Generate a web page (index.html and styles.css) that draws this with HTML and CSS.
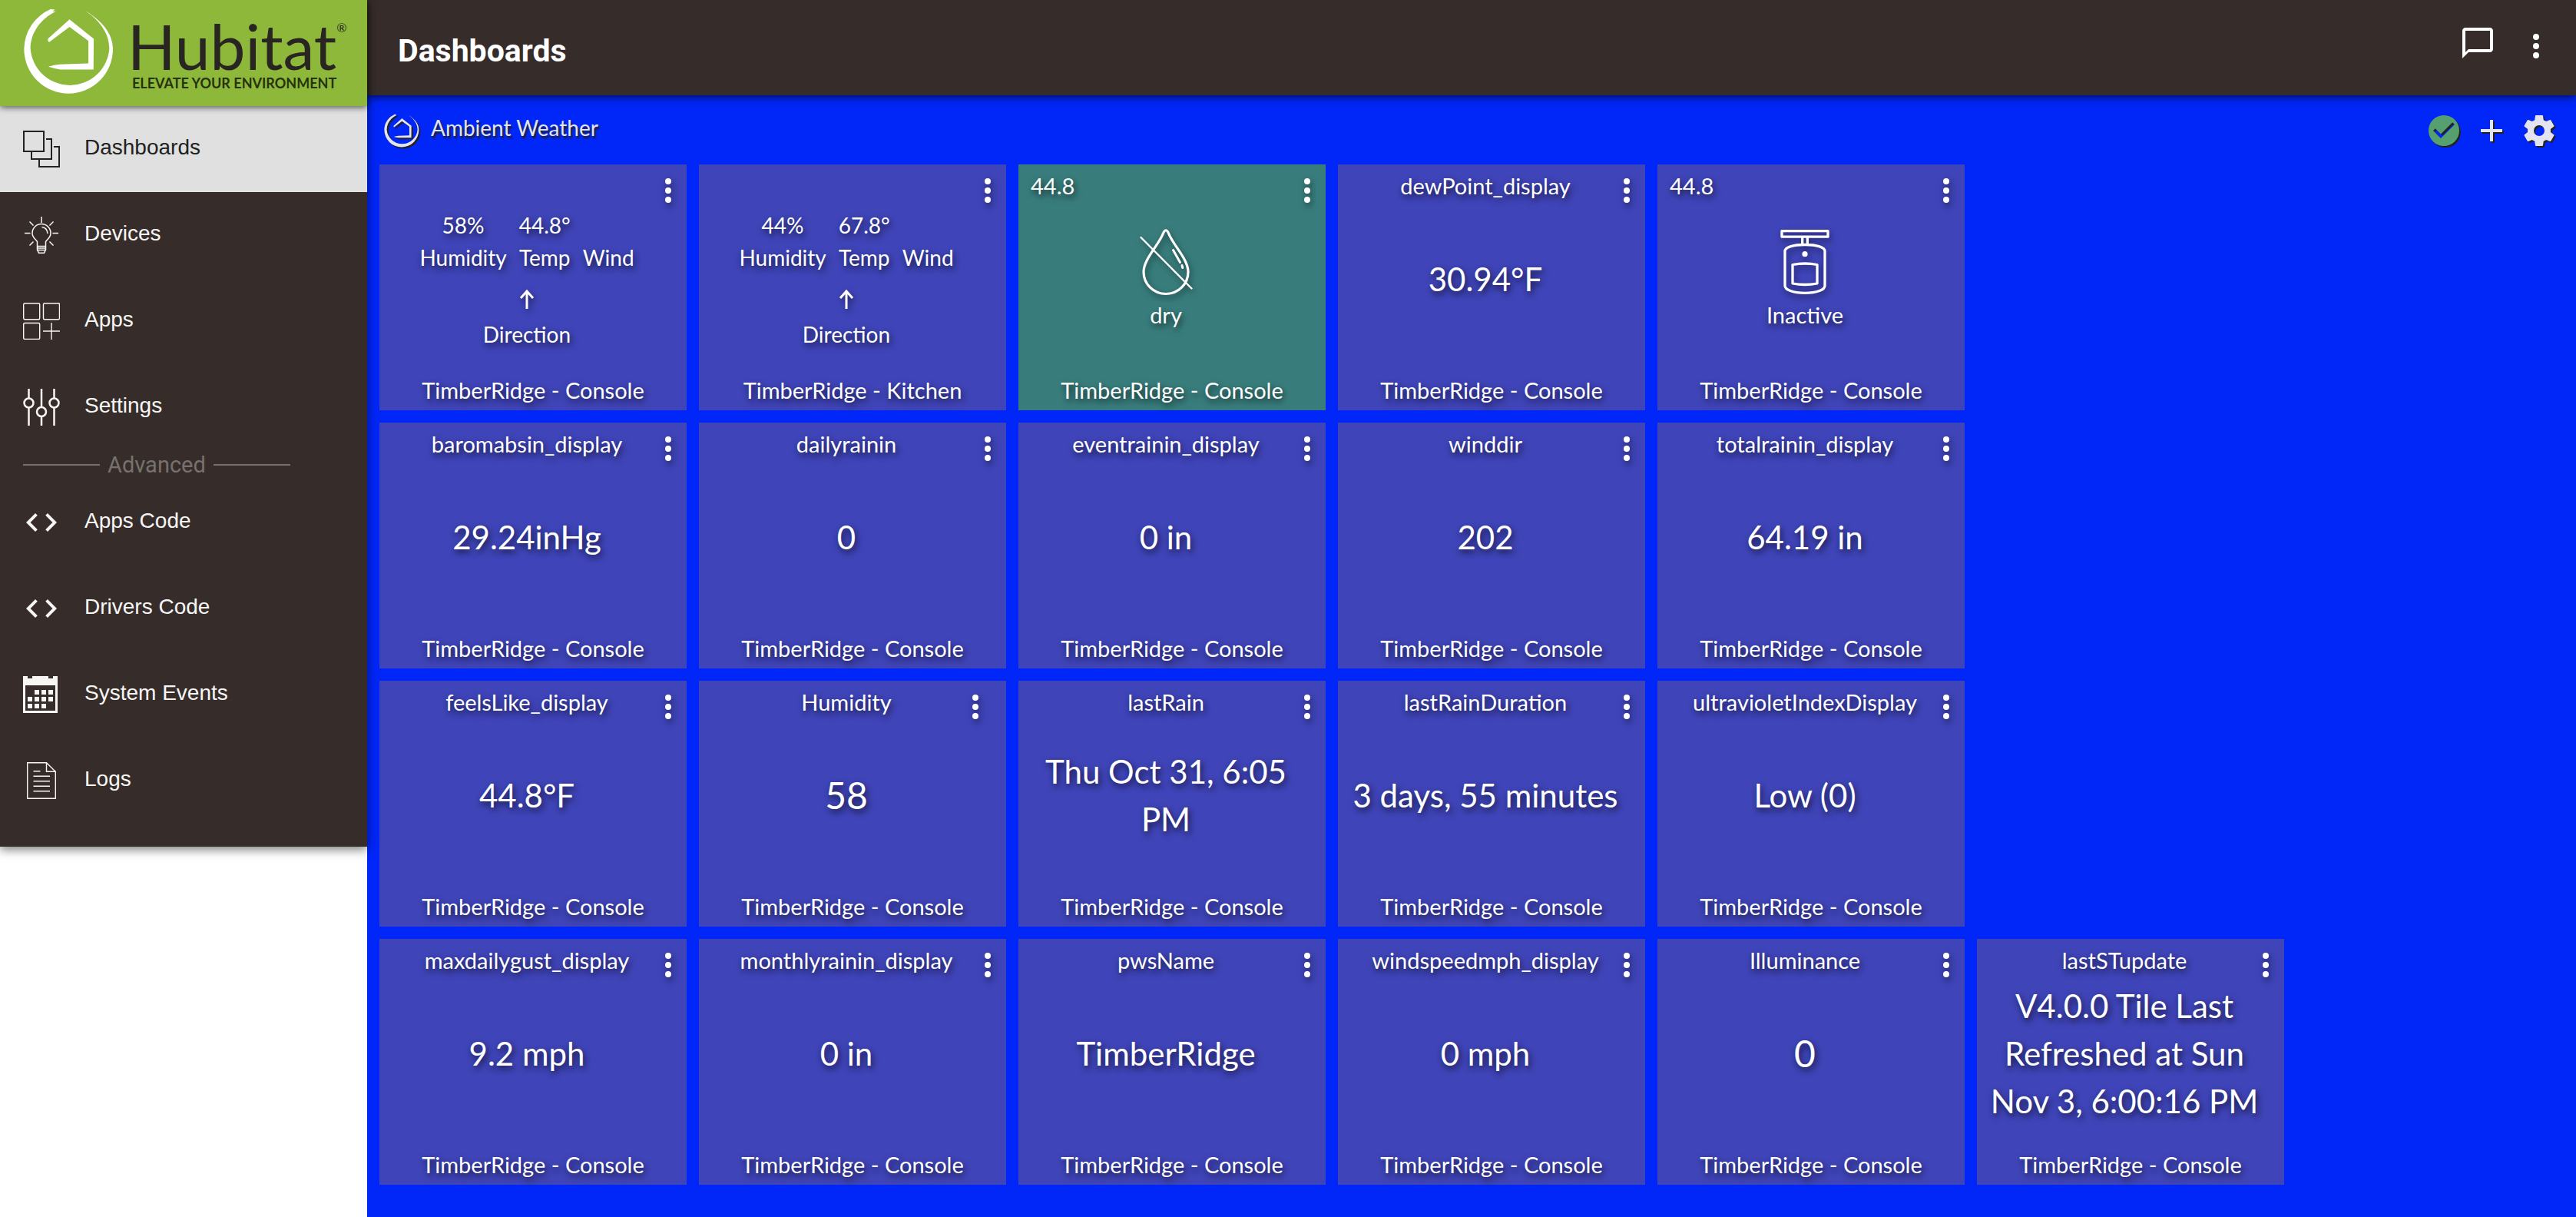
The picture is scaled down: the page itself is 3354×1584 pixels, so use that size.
FILE: index.html
```html
<!DOCTYPE html>
<html lang="en">
<head>
<meta charset="utf-8">
<title>Dashboards</title>
<link rel="stylesheet" href="styles.css">
</head>
<body>
<svg class="sprite" aria-hidden="true">
  <symbol id="mark" viewBox="92 30 352 340">
    <path d="M198 35A174 174 0 0 0 93 192A174 174 0 0 0 441 192C441 150 420 95 333 42C400 88 427 140 427 191A155 155 0 0 1 118 191C118 130 155 75 218 44L204 44L214 38Z"/>
    <path d="M271 76L366 152L365 272H235Q210 269 188 261Q210 254 235 252L345 248V160L271 105L192 165Q184 162 187 151Z"/>
  </symbol>
  <symbol id="dots" viewBox="0 0 24 24"><path d="M12 8a2 2 0 1 0 0-4 2 2 0 0 0 0 4zm0 2a2 2 0 1 0 0 4 2 2 0 0 0 0-4zm0 6a2 2 0 1 0 0 4 2 2 0 0 0 0-4z"/></symbol>
  <symbol id="code" viewBox="0 0 24 24"><path d="M9.400 16.600L4.800 12l4.600-4.600L8 6l-6 6 6 6 1.400-1.400zm5.200 0l4.600-4.600-4.600-4.600L16 6l6 6-6 6-1.400-1.400z"/></symbol>
  <symbol id="arrow" viewBox="0 0 24 28"><path d="M12 26V4M4 12L12 3L20 12" fill="none" stroke="currentColor" stroke-width="3"/></symbol>
</svg>

<div class="app">
  <aside class="sidebar">
    <a class="brand" href="#">
      <svg class="brand-mark" aria-hidden="true"><use href="#mark"/></svg>
      <span class="brand-words">
        <span class="brand-name">Hubitat<sup>®</sup></span>
        <span class="brand-tag">ELEVATE YOUR ENVIRONMENT</span>
      </span>
    </a>
    <nav class="menu">
      <a class="item active" href="#">
        <svg class="line" viewBox="0 0 48 48" stroke-width="2"><path d="M1 1H27V27H1ZM30 11H37V37H11V28M40 21H47V47H21V38"/></svg>
        <span>Dashboards</span>
      </a>
      <a class="item" href="#">
        <svg class="line" viewBox="0 0 48 48" stroke-width="1.500"><path d="M24 0V8M2 21.500H9.500M38.500 21.500H46M8.500 6.500L13.500 11.500M39.500 6.500L34.500 11.500M13.500 32.500L8.500 37.500M34.500 32.500L39.500 37.500M18.500 32.500C16 29 12 27 12 21.500a12 12 0 0 1 24 0C36 27 32 29 29.500 32.500V43L27.500 47.200H20.500L18.500 43ZM18.500 38.500H29.500M18.500 41H29.500M18.500 43.500H29.500M24.500 13.500Q31.500 14.500 32 22"/></svg>
        <span>Devices</span>
      </a>
      <a class="item" href="#">
        <svg class="line" viewBox="0 0 48 48" stroke-width="1.400"><rect x="0.700" y="0.700" width="21" height="21" rx="1.500"/><rect x="26.500" y="0.700" width="21" height="21" rx="1.500"/><rect x="0.700" y="26.500" width="21" height="21" rx="1.500"/><path d="M37 26V48M26 37H48"/></svg>
        <span>Apps</span>
      </a>
      <a class="item" href="#">
        <svg class="line" viewBox="0 0 48 48" stroke-width="2.500"><path d="M7.500 0V12.500M7.500 24.500V48M24 0V24M24 36V48M40.500 0V12.500M40.500 24.500V48"/><circle cx="7.500" cy="18.500" r="6"/><circle cx="24" cy="30" r="6"/><circle cx="40.500" cy="18.500" r="6"/></svg>
        <span>Settings</span>
      </a>
      <div class="divider">Advanced</div>
      <a class="item" href="#"><svg aria-hidden="true"><use href="#code"/></svg><span>Apps Code</span></a>
      <a class="item" href="#"><svg aria-hidden="true"><use href="#code"/></svg><span>Drivers Code</span></a>
      <a class="item" href="#">
        <svg viewBox="0 0 48 48"><path fill-rule="evenodd" d="M0 0H6V3H12V0H33V3H39V0H45V48H0ZM3 12V45H42V12Z"/><path d="M15 18h6v6h-6zM24 18h6v6h-6zM33 18h6v6h-6zM6 27h6v6h-6zM15 27h6v6h-6zM24 27h6v6h-6zM33 27h6v6h-6zM6 36h6v6h-6zM15 36h6v6h-6zM24 36h6v6h-6z"/></svg>
        <span>System Events</span>
      </a>
      <a class="item" href="#">
        <svg class="line" viewBox="0 0 48 48" stroke-width="1.400"><path d="M5.700 0.700H30.500L42.300 12.300V47.300H5.700ZM30.500 0.700V12.300H42.300M13.500 11.700H22.500M13.500 18.300H35M13.500 24.700H35M13.500 31.300H35M13.500 37.700H35"/></svg>
        <span>Logs</span>
      </a>
    </nav>
  </aside>

  <main class="main">
    <header class="topbar">
      <h1>Dashboards</h1>
      <button class="icon-btn chat" aria-label="Messages"><svg viewBox="0 0 24 24"><path d="M20 2H4c-1.100 0-2 .9-2 2v18l4-4h14c1.100 0 2-.9 2-2V4c0-1.100-.9-2-2-2zm0 14H6l-2 2V4h16v12z"/></svg></button>
      <button class="icon-btn" aria-label="More"><svg><use href="#dots"/></svg></button>
    </header>

    <section class="board">
      <div class="toolbar">
        <svg class="board-mark" aria-hidden="true"><use href="#mark"/></svg>
        <h2>Ambient Weather</h2>
        <button class="icon-btn ok" aria-label="Connected"><svg viewBox="0 0 24 24"><path fill-rule="evenodd" d="M12 2a10 10 0 1 0 0 20 10 10 0 0 0 0-20zM10 17L5 12l1.400-1.400L10 14.200l7.600-7.600L19 8z"/></svg></button>
        <button class="icon-btn" aria-label="Add"><svg viewBox="0 0 24 24"><path d="M19 13h-6v6h-2v-6H5v-2h6V5h2v6h6z"/></svg></button>
        <button class="icon-btn" aria-label="Board settings"><svg viewBox="0 0 24 24"><path d="M12 15.500A3.500 3.500 0 0 1 8.500 12 3.500 3.500 0 0 1 12 8.500a3.500 3.500 0 0 1 3.500 3.500 3.500 3.500 0 0 1-3.500 3.500m7.430-2.530c.04-.32.07-.64.07-.97s-.03-.66-.07-1l2.110-1.630c.19-.15.24-.42.12-.64l-2-3.460c-.12-.22-.39-.31-.61-.22l-2.490 1c-.52-.39-1.060-.73-1.690-.98l-.37-2.650A.506.506 0 0 0 14 2h-4c-.25 0-.46.18-.5.420l-.37 2.650c-.63.25-1.170.59-1.690.98l-2.490-1c-.22-.09-.49 0-.61.22l-2 3.460c-.13.22-.07.49.12.64L4.570 11c-.04.34-.07.67-.07 1s.03.65.07.97l-2.110 1.660c-.19.15-.25.42-.12.64l2 3.460c.12.22.39.3.61.22l2.490-1.010c.52.4 1.060.74 1.690.99l.37 2.650c.04.24.25.42.5.42h4c.25 0 .46-.18.5-.42l.37-2.650c.63-.26 1.170-.59 1.690-.99l2.490 1.010c.22.08.49 0 .61-.22l2-3.460c.12-.22.07-.49-.12-.64z"/></svg></button>
      </div>

      <div class="tiles">
        <article class="tile">
          <button class="tile-menu" aria-label="Tile menu"><svg><use href="#dots"/></svg></button>
          <div class="tile-title"></div>
          <div class="tile-body weather">
            <div class="readings">
              <span>58%</span><span>44.8°</span><span></span>
              <span>Humidity</span><span>Temp</span><span>Wind</span>
            </div>
            <svg class="arrow" aria-hidden="true"><use href="#arrow"/></svg>
            <div>Direction</div>
          </div>
          <footer>TimberRidge - Console</footer>
        </article>
        <article class="tile">
          <button class="tile-menu" aria-label="Tile menu"><svg><use href="#dots"/></svg></button>
          <div class="tile-title"></div>
          <div class="tile-body weather">
            <div class="readings">
              <span>44%</span><span>67.8°</span><span></span>
              <span>Humidity</span><span>Temp</span><span>Wind</span>
            </div>
            <svg class="arrow" aria-hidden="true"><use href="#arrow"/></svg>
            <div>Direction</div>
          </div>
          <footer>TimberRidge - Kitchen</footer>
        </article>
        <article class="tile dry">
          <button class="tile-menu" aria-label="Tile menu"><svg><use href="#dots"/></svg></button>
          <div class="tile-title corner">44.8</div>
          <div class="tile-body">
            <svg class="device" viewBox="0 0 96 96"><path d="M45 9.500Q48 4 51 9.500C57 26 77 44 77 61A29 28.500 0 0 1 19 61C19 44 39 26 45 9.500Z" stroke-width="3.200"/><path d="M15.500 16L81.500 82.500" stroke-width="2.400"/><path d="M57.500 32.500L66.500 48.500M69 52.500L69.800 55.500" stroke-width="3"/></svg>
            <div>dry</div>
          </div>
          <footer>TimberRidge - Console</footer>
        </article>
        <article class="tile">
          <button class="tile-menu" aria-label="Tile menu"><svg><use href="#dots"/></svg></button>
          <div class="tile-title">dewPoint_display</div>
          <div class="tile-body value">30.94°F</div>
          <footer>TimberRidge - Console</footer>
        </article>
        <article class="tile">
          <button class="tile-menu" aria-label="Tile menu"><svg><use href="#dots"/></svg></button>
          <div class="tile-title corner">44.8</div>
          <div class="tile-body">
            <svg class="device" viewBox="0 0 96 96"><path d="M18 7.700H78V15.200H18ZM44.700 16V24M51.300 16V24M22 34C22 29 32 25.500 48 25.500S74 29 74 34V79C74 84 64 88.300 48 88.300S22 84 22 79ZM32 51.500Q48 48.500 64 51.500V76Q48 79 32 76Z" stroke-width="3.300"/><circle cx="48" cy="37.700" r="3.600" fill="currentColor" stroke="none"/></svg>
            <div>Inactive</div>
          </div>
          <footer>TimberRidge - Console</footer>
        </article>

        <article class="tile row-start">
          <button class="tile-menu" aria-label="Tile menu"><svg><use href="#dots"/></svg></button>
          <div class="tile-title">baromabsin_display</div>
          <div class="tile-body value">29.24inHg</div>
          <footer>TimberRidge - Console</footer>
        </article>
        <article class="tile">
          <button class="tile-menu" aria-label="Tile menu"><svg><use href="#dots"/></svg></button>
          <div class="tile-title">dailyrainin</div>
          <div class="tile-body value">0</div>
          <footer>TimberRidge - Console</footer>
        </article>
        <article class="tile">
          <button class="tile-menu" aria-label="Tile menu"><svg><use href="#dots"/></svg></button>
          <div class="tile-title">eventrainin_display</div>
          <div class="tile-body value">0 in</div>
          <footer>TimberRidge - Console</footer>
        </article>
        <article class="tile">
          <button class="tile-menu" aria-label="Tile menu"><svg><use href="#dots"/></svg></button>
          <div class="tile-title">winddir</div>
          <div class="tile-body value">202</div>
          <footer>TimberRidge - Console</footer>
        </article>
        <article class="tile">
          <button class="tile-menu" aria-label="Tile menu"><svg><use href="#dots"/></svg></button>
          <div class="tile-title">totalrainin_display</div>
          <div class="tile-body value">64.19 in</div>
          <footer>TimberRidge - Console</footer>
        </article>

        <article class="tile row-start">
          <button class="tile-menu" aria-label="Tile menu"><svg><use href="#dots"/></svg></button>
          <div class="tile-title">feelsLike_display</div>
          <div class="tile-body value">44.8°F</div>
          <footer>TimberRidge - Console</footer>
        </article>
        <article class="tile sensor">
          <button class="tile-menu" aria-label="Tile menu"><svg><use href="#dots"/></svg></button>
          <div class="tile-title">Humidity</div>
          <div class="tile-body value large">58</div>
          <footer>TimberRidge - Console</footer>
        </article>
        <article class="tile">
          <button class="tile-menu" aria-label="Tile menu"><svg><use href="#dots"/></svg></button>
          <div class="tile-title">lastRain</div>
          <div class="tile-body value">Thu Oct 31, 6:05 PM</div>
          <footer>TimberRidge - Console</footer>
        </article>
        <article class="tile">
          <button class="tile-menu" aria-label="Tile menu"><svg><use href="#dots"/></svg></button>
          <div class="tile-title">lastRainDuration</div>
          <div class="tile-body value">3 days, 55 minutes</div>
          <footer>TimberRidge - Console</footer>
        </article>
        <article class="tile">
          <button class="tile-menu" aria-label="Tile menu"><svg><use href="#dots"/></svg></button>
          <div class="tile-title">ultravioletIndexDisplay</div>
          <div class="tile-body value">Low (0)</div>
          <footer>TimberRidge - Console</footer>
        </article>

        <article class="tile row-start">
          <button class="tile-menu" aria-label="Tile menu"><svg><use href="#dots"/></svg></button>
          <div class="tile-title">maxdailygust_display</div>
          <div class="tile-body value">9.2 mph</div>
          <footer>TimberRidge - Console</footer>
        </article>
        <article class="tile">
          <button class="tile-menu" aria-label="Tile menu"><svg><use href="#dots"/></svg></button>
          <div class="tile-title">monthlyrainin_display</div>
          <div class="tile-body value">0 in</div>
          <footer>TimberRidge - Console</footer>
        </article>
        <article class="tile">
          <button class="tile-menu" aria-label="Tile menu"><svg><use href="#dots"/></svg></button>
          <div class="tile-title">pwsName</div>
          <div class="tile-body value">TimberRidge</div>
          <footer>TimberRidge - Console</footer>
        </article>
        <article class="tile">
          <button class="tile-menu" aria-label="Tile menu"><svg><use href="#dots"/></svg></button>
          <div class="tile-title">windspeedmph_display</div>
          <div class="tile-body value">0 mph</div>
          <footer>TimberRidge - Console</footer>
        </article>
        <article class="tile">
          <button class="tile-menu" aria-label="Tile menu"><svg><use href="#dots"/></svg></button>
          <div class="tile-title">Illuminance</div>
          <div class="tile-body value large">0</div>
          <footer>TimberRidge - Console</footer>
        </article>
        <article class="tile">
          <button class="tile-menu" aria-label="Tile menu"><svg><use href="#dots"/></svg></button>
          <div class="tile-title">lastSTupdate</div>
          <div class="tile-body value">V4.0.0 Tile Last Refreshed at Sun Nov 3, 6:00:16 PM</div>
          <footer>TimberRidge - Console</footer>
        </article>
      </div>
    </section>
  </main>
</div>
</body>
</html>
```
FILE: styles.css
```css
* { box-sizing: border-box; }

body {
  margin: 0;
  background: #fff;
  font-family: Lato, "Open Sans", sans-serif;
  font-size: 29px;
  line-height: 42px;
}

svg { display: block; fill: currentColor; }
svg.line { fill: none; stroke: currentColor; }
.sprite { position: absolute; width: 0; height: 0; }
button { border: 0; padding: 0; background: none; color: inherit; cursor: pointer; }
a { color: inherit; text-decoration: none; }

.app {
  display: grid;
  grid-template-columns: 478px minmax(0, 1fr);
  min-height: 100vh;
}

/* Sidebar */
.sidebar {
  align-self: start;
  z-index: 1;
  padding-bottom: 30px;
  background: #362d2b;
  color: #f8f6f5;
  box-shadow: 0 4px 12px rgba(0, 0, 0, 0.5);
  font-family: "Liberation Sans", Arial, sans-serif;
  font-size: 28px;
}
.brand {
  position: relative;
  display: flex;
  gap: 18px;
  height: 138px;
  padding: 10px 0 0 31px;
  background: #8db83a;
  color: #282522;
  box-shadow: 0 2px 8px rgba(0, 0, 0, 0.6);
  font-family: Lato, sans-serif;
}
.brand-mark { width: 117px; height: 113px; color: #fff; }
.brand-words { display: flex; flex-direction: column; }
.brand-name { display: flex; height: 89px; font-size: 82px; line-height: 98px; }
.brand-name sup { padding-top: 12px; font-size: 16px; line-height: 28px; }
.brand-tag { padding-left: 6px; font-size: 18px; line-height: 18px; font-weight: 700; color: #26330f; }

.item {
  display: flex;
  align-items: center;
  gap: 32px;
  height: 112px;
  padding-left: 30px;
}
.item svg { flex: none; width: 48px; height: 48px; }
.item span { padding-bottom: 4px; }
.item.active { background: #e0e0e0; color: #222; }
.divider {
  display: flex;
  align-items: center;
  gap: 10px;
  height: 38px;
  padding-left: 30px;
  color: #77716f;
  font-family: Roboto, sans-serif;
  font-size: 29px;
}
.divider::before, .divider::after { content: ""; width: 100px; height: 2px; background: #77716f; }

/* Header */
.main { display: flex; flex-direction: column; }
.topbar {
  position: relative;
  display: flex;
  align-items: center;
  height: 124px;
  padding: 0 28px 4px 40px;
  background: #362d2b;
  color: #fff;
  box-shadow: 0 2px 10px rgba(0, 0, 0, 0.7);
}
.topbar h1 {
  margin: 0 auto 0 0;
  padding-top: 12px;
  font: 700 41px/48px Roboto, sans-serif;
}
.icon-btn svg { width: 48px; height: 48px; }
.icon-btn { margin-left: 14px; }
.topbar .chat { padding-bottom: 8px; margin-right: 14px; }

/* Board */
.board { flex: 1; padding: 0 16px 42px; background: #0026f8; }
.toolbar {
  display: flex;
  align-items: center;
  height: 90px;
  padding: 2px 8px 0 6px;
  color: #e4e4f0;
}
.toolbar h2 { margin: 0 auto 0 15px; padding-bottom: 8px; font: 400 28px/42px Lato, sans-serif; text-shadow: 2px 3px 2px #222; }
.toolbar svg { filter: drop-shadow(2px 2px 0 #222); }
.board-mark { width: 46px; height: 44px; }
.ok { color: #56a06f; }

.tiles {
  display: grid;
  grid-template-columns: repeat(6, 400px);
  gap: 16px;
}
.tile {
  position: relative;
  display: flex;
  flex-direction: column;
  min-height: 320px;
  background: #3f44b8;
  color: #fff;
  text-align: center;
  text-shadow: 2px 4px 8px rgba(0, 0, 0, 0.7);
}
.tile svg { filter: drop-shadow(2px 4px 4px rgba(0, 0, 0, 0.5)); }
.tile.dry { background: #387d7c; }
.row-start { grid-column: 1; }
.tile-menu { position: absolute; top: 10px; right: 0; }
.sensor .tile-menu { right: 16px; }
.tile-menu svg { width: 48px; height: 48px; }
.tile-title { height: 54px; padding: 7px 32px 0 16px; }
.tile-title.corner { text-align: left; }
.tile-body {
  flex: 1;
  display: flex;
  flex-direction: column;
  align-items: center;
  justify-content: center;
  padding: 0 32px 0 16px;
}
.tile-body.value { padding-top: 2px; font-size: 42px; line-height: 62px; }
.tile-body.large { font-size: 48px; }
.tile-body.weather { padding-top: 4px; font-size: 28px; }
.tile footer { height: 78px; padding-top: 31px; }
.readings { display: grid; grid-template-columns: repeat(3, auto); column-gap: 16px; grid-auto-rows: 42px; }
.arrow { width: 24px; height: 28px; margin: 20px 0 10px; }
.tile .device { width: 96px; height: 96px; fill: none; stroke: currentColor; stroke-linecap: round; stroke-linejoin: round; }
```
